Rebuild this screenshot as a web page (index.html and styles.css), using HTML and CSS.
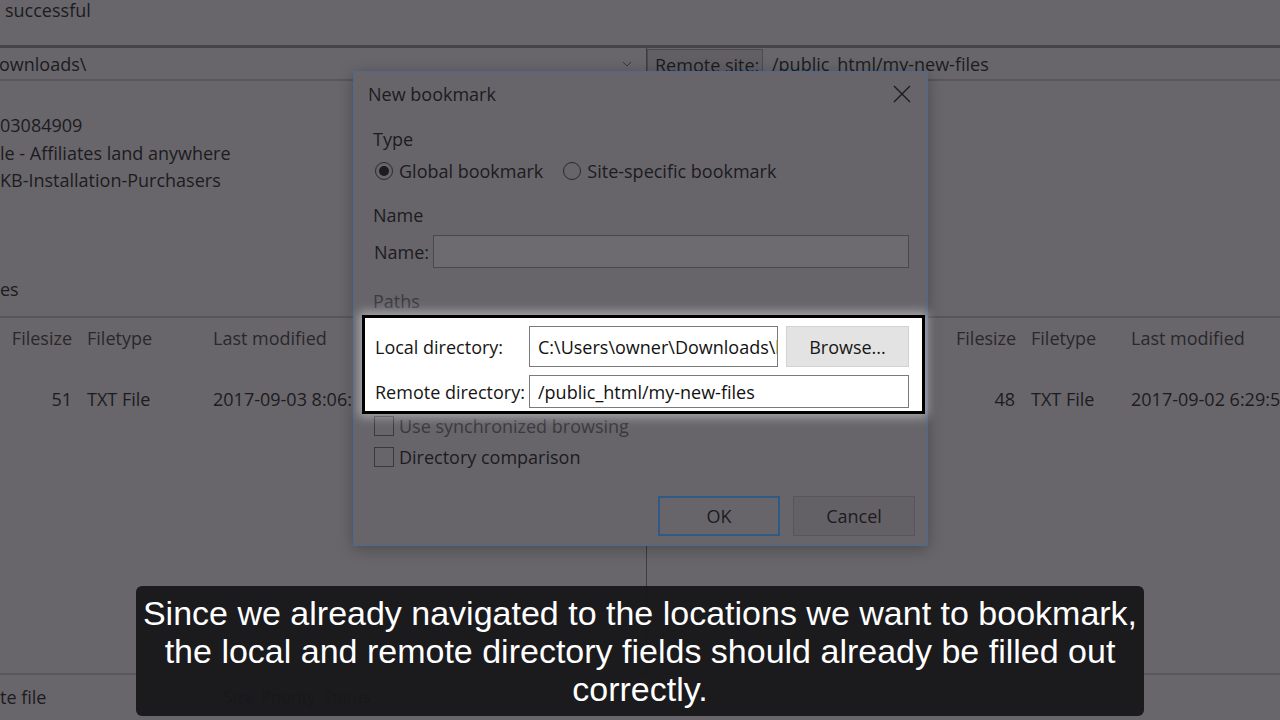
FILE: index.html
```html
<!DOCTYPE html>
<html lang="en">

<head>
    <meta charset="UTF-8">
    <meta name="viewport" content="width=device-width, initial-scale=1.0">
    <title>New bookmark</title>
    <link rel="stylesheet" href="styles.css">
</head>

<body>
    <div class="app">
        <!-- Message log -->
        <div class="log">successful</div>

        <!-- Local / remote panes -->
        <div class="panes">
            <section class="pane local">
                <div class="sitebar">
                    <span class="path">ownloads\</span>
                    <svg class="chev" width="10" height="6" viewBox="0 0 10 6"><path d="M1 1l4 4 4-4" fill="none" stroke="#3a383c" stroke-width="1"/></svg>
                </div>
                <div class="tree">
                    <div>03084909</div>
                    <div>le - Affiliates land anywhere</div>
                    <div>KB-Installation-Purchasers</div>
                    <div class="tree-last">es</div>
                </div>
                <div class="list">
                    <div class="row head">
                        <span class="size">Filesize</span>
                        <span class="col">Filetype</span>
                        <span class="col">Last modified</span>
                    </div>
                    <div class="row">
                        <span class="size">51</span>
                        <span class="col">TXT File</span>
                        <span class="col">2017-09-03 8:06:</span>
                    </div>
                </div>
            </section>

            <section class="pane remote">
                <div class="sitebar">
                    <span class="site-label">Remote site:</span>
                    <span class="path">/public_html/my-new-files</span>
                </div>
                <div class="tree"></div>
                <div class="list">
                    <div class="row head">
                        <span></span>
                        <span class="size">Filesize</span>
                        <span class="col">Filetype</span>
                        <span class="col">Last modified</span>
                    </div>
                    <div class="row">
                        <span></span>
                        <span class="size">48</span>
                        <span class="col">TXT File</span>
                        <span class="col">2017-09-02 6:29:5</span>
                    </div>
                </div>
            </section>
        </div>

        <!-- Transfer queue -->
        <div class="queue">
            <span>te file</span>
            <span class="queue-cols">Size&nbsp;&nbsp;Priority&nbsp;&nbsp;Status</span>
        </div>
    </div>

    <!-- New bookmark dialog -->
    <div class="dialog">
        <div class="titlebar">
            <span>New bookmark</span>
            <svg class="close" width="18" height="18" viewBox="0 0 18 18"><path d="M1 1l16 16M17 1L1 17" stroke="#1c1b1f" stroke-width="1.4"/></svg>
        </div>
        <div class="dialog-body">
            <div class="group-title">Type</div>
            <div class="radios">
                <label class="radio"><span class="dot checked"></span>Global bookmark</label>
                <label class="radio"><span class="dot"></span>Site-specific bookmark</label>
            </div>

            <div class="group-title name-title">Name</div>
            <div class="name-row">
                <span class="name-label">Name:</span>
                <div class="field dim"></div>
            </div>

            <div class="group-title paths-title">Paths</div>
            <div class="highlight">
                <span class="hl-label">Local directory:</span>
                <div class="local-row">
                    <div class="field tall">C:\Users\owner\Downloads\l</div>
                    <button class="browse">Browse...</button>
                </div>
                <span class="hl-label">Remote directory:</span>
                <div class="field">/public_html/my-new-files</div>
            </div>

            <label class="check"><span class="box"></span>Use synchronized browsing</label>
            <label class="check"><span class="box"></span>Directory comparison</label>

            <div class="buttons">
                <button class="btn ok">OK</button>
                <button class="btn">Cancel</button>
            </div>
        </div>
    </div>

    <!-- Subtitle -->
    <div class="caption">Since we already navigated to the locations we want to bookmark,<br>the local and remote directory fields should already be filled out<br>correctly.</div>
</body>

</html>
```

FILE: styles.css
```css
* {
    margin: 0;
    padding: 0;
    box-sizing: border-box;
}

body {
    width: 1280px;
    height: 720px;
    overflow: hidden;
    position: relative;
    font-family: "Open Sans", "Noto Sans", sans-serif;
    font-size: 18px;
    background-color: #68666a;
    color: #1c1b1f;
}

/* ---------- background app ---------- */

.app {
    display: flex;
    flex-direction: column;
    height: 720px;
}

.log {
    height: 48px;
    padding-left: 5px;
    line-height: 20px;
    border-bottom: 3px solid #464448;
}

.panes {
    display: grid;
    grid-template-columns: 646px 1fr;
    height: 627px;
    border-bottom: 2px solid #5a585c;
}

.pane {
    display: flex;
    flex-direction: column;
}

.remote {
    border-left: 1px solid #3e3c40;
}

.sitebar {
    height: 33px;
    display: flex;
    align-items: center;
    border-bottom: 2px solid #58565a;
}

.local .sitebar {
    padding-right: 14px;
    justify-content: space-between;
}

.local .sitebar .path {
    margin-left: -1px;
}

.remote .sitebar {
    align-items: stretch;
}

.site-label {
    display: flex;
    align-items: center;
    width: 116px;
    padding-left: 7px;
    margin-top: 1px;
    border: 1px solid #4c4a4e;
    border-bottom: none;
    background-color: #625f64;
}

.remote .sitebar .path {
    display: flex;
    align-items: center;
    padding-left: 9px;
}

.tree {
    height: 237px;
    padding-top: 31px;
    line-height: 27.5px;
    border-bottom: 2px solid #58565a;
}

.tree-last {
    margin-top: 81px;
}

.list .row {
    display: grid;
    grid-template-columns: 72px 126px 1fr;
    white-space: nowrap;
    line-height: 26px;
}

.remote .list .row {
    grid-template-columns: 309px 59px 100px 1fr;
}

.list .head {
    padding-top: 7px;
    height: 68px;
    color: #29282c;
}

.size {
    text-align: right;
}

.col {
    padding-left: 15px;
}

.remote .col {
    padding-left: 16px;
}

.queue {
    display: flex;
    align-items: center;
    height: 43px;
    white-space: nowrap;
}

.queue-cols {
    margin-left: 177px;
    color: #3c3a3e;
    font-size: 16px;
}

/* ---------- dialog ---------- */

.dialog {
    position: absolute;
    left: 353px;
    top: 71px;
    width: 575px;
    height: 475px;
    background-color: #67656a;
    border: 1px solid #4a6a90;
    box-shadow: 0 3px 14px rgba(0, 0, 0, 0.28);
}

.titlebar {
    height: 46px;
    display: flex;
    align-items: center;
    justify-content: space-between;
    padding: 0 16px 2px 14px;
}

.dialog-body {
    padding: 9px 12px 0 19px;
}

.group-title {
    line-height: 24px;
}

.radios {
    display: flex;
    gap: 18px;
    margin-top: 8px;
    line-height: 24px;
}

.radio,
.check {
    display: flex;
    align-items: center;
    gap: 6px;
}

.dot {
    width: 18px;
    height: 18px;
    border: 1px solid #2a292d;
    border-radius: 50%;
    margin-left: 2px;
    display: flex;
    align-items: center;
    justify-content: center;
}

.dot.checked::after {
    content: "";
    width: 10px;
    height: 10px;
    border-radius: 50%;
    background-color: #1c1b1f;
}

.name-title {
    margin-top: 20px;
}

.name-row {
    display: flex;
    align-items: center;
    margin-top: 8px;
    margin-right: 6px;
}

.name-label {
    width: 60px;
    padding-left: 1px;
}

.field {
    flex: 1;
    min-width: 0;
    height: 33px;
    display: flex;
    align-items: center;
    padding-left: 8px;
    background-color: #ffffff;
    border: 1px solid #7a7a7a;
    white-space: nowrap;
    overflow: hidden;
    color: #111;
}

.field.dim {
    background-color: #6d6b6f;
    border-color: #4a484c;
}

.paths-title {
    margin-top: 21px;
    color: #3c3a3e;
}

/* the emphasised part of the screenshot */
.highlight {
    position: relative;
    display: grid;
    grid-template-columns: 154px minmax(0, 1fr);
    row-gap: 8px;
    align-items: center;
    margin: 2px -10px 0 -11px;
    padding: 8px 13px 3px 10px;
    height: 99px;
    background-color: #ffffff;
    border: 3px solid #000000;
    box-shadow: 0 0 10px 3px rgba(255, 255, 255, 0.45);
    color: #161616;
}

.local-row {
    display: flex;
    gap: 8px;
    min-width: 0;
}

.field.tall {
    height: 41px;
}

.browse {
    flex: none;
    width: 123px;
    height: 41px;
    font-family: inherit;
    font-size: 18px;
    color: #161616;
    background-color: #e3e3e3;
    border: 1px solid #d2d2d2;
}

.check {
    line-height: 24px;
    margin-left: 1px;
    gap: 5px;
}

.check + .check {
    margin-top: 7px;
}

.box {
    width: 20px;
    height: 20px;
    border: 1px solid #3a383c;
}

.check:first-of-type {
    color: #3a383c;
}

.buttons {
    display: flex;
    justify-content: flex-end;
    gap: 13px;
    margin-top: 27px;
}

.btn {
    width: 122px;
    height: 40px;
    font-family: inherit;
    font-size: 18px;
    color: #1c1b1f;
    background-color: #636166;
    border: 1px solid #58565a;
}

.btn.ok {
    border: 2px solid #2f5a86;
    background-color: #67656a;
}

/* ---------- subtitle ---------- */

.caption {
    position: absolute;
    left: 136px;
    top: 586px;
    width: 1008px;
    height: 130px;
    padding-top: 8px;
    border-radius: 6px;
    background-color: rgba(22, 20, 24, 0.93);
    color: #ffffff;
    font-family: "Liberation Sans", Arial, sans-serif;
    font-size: 34px;
    line-height: 38px;
    text-align: center;
    white-space: nowrap;
}
```
